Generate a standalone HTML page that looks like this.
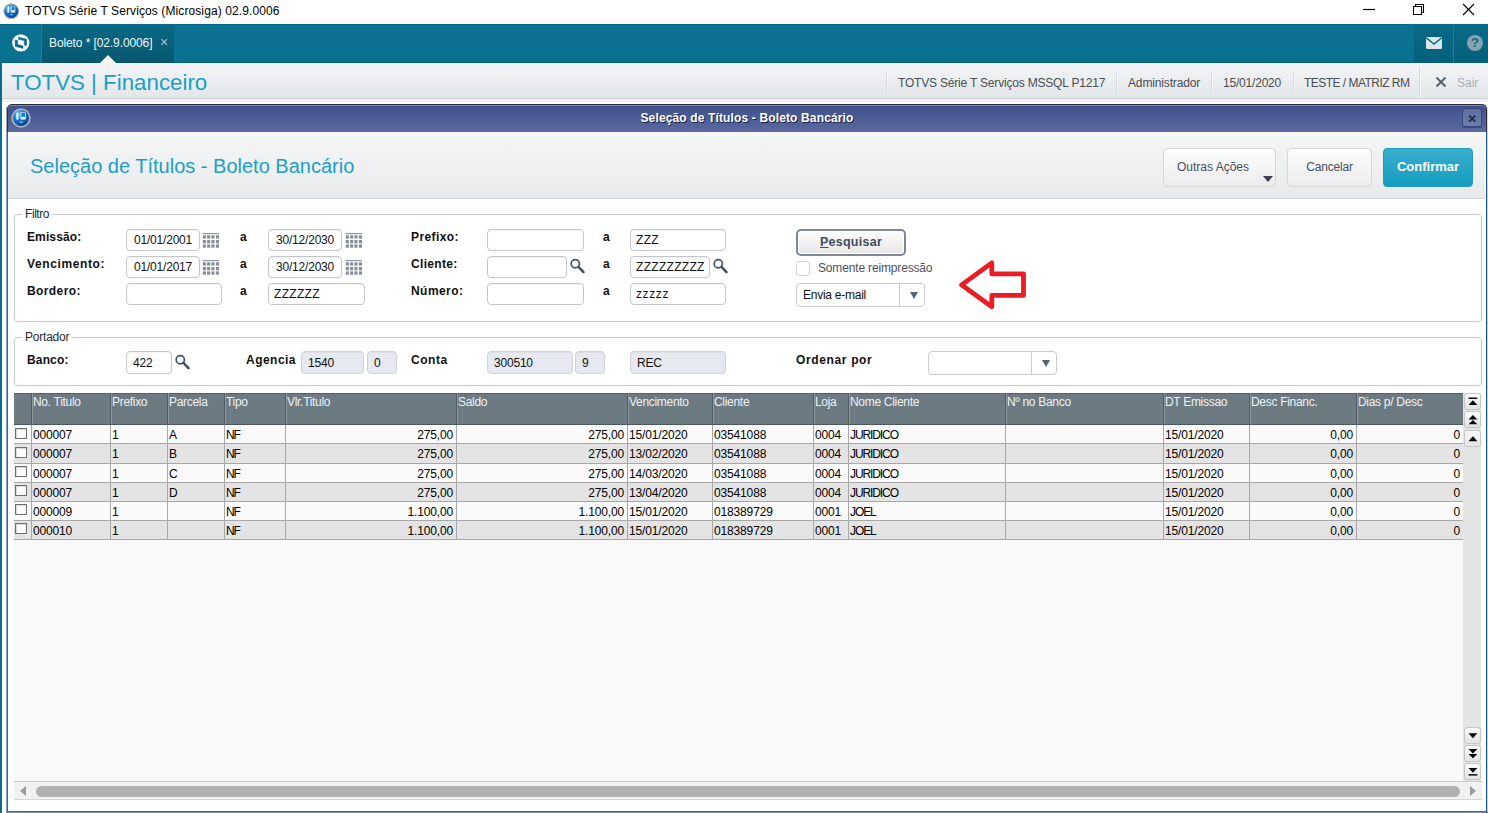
<!DOCTYPE html>
<html>
<head>
<meta charset="utf-8">
<title>TOTVS</title>
<style>
*{box-sizing:border-box;margin:0;padding:0}
html,body{width:1488px;height:813px;overflow:hidden;background:#fff}
body{font-family:"Liberation Sans",sans-serif;font-size:12px;color:#000;position:relative}
.abs{position:absolute}
#wintitle{left:0;top:0;width:1488px;height:24px;background:#fff}
#wintitle .t{left:25px;top:4px;font-size:12px;color:#000;white-space:nowrap;letter-spacing:.1px}
#teal{left:0;top:24px;width:1488px;height:39px;background:#0b7190;border-top:1px solid #056b88;border-bottom:1px solid #03647f}
#leftstrip{left:0;top:63px;width:2px;height:750px;background:#0a6c88}
#tab{left:42px;top:24px;width:132px;height:39px;background:linear-gradient(#0a6a85,#075670)}
#tabsep{left:41px;top:24px;width:1px;height:39px;background:#3a7185}
#tab .t{left:7px;top:12px;color:#eef6f8;font-size:12px;white-space:nowrap;letter-spacing:-.1px}
#tab .x{left:118px;top:10px;color:#a6c6d1;font-size:14px}
#tabarrow{left:100.4px;top:55px;width:0;height:0;border-left:8px solid transparent;border-right:8px solid transparent;border-bottom:8px solid #f4f4f3}
#darkr{left:1414px;top:24px;width:74px;height:39px;background:linear-gradient(#086a86,#05607b)}
#darksep{left:1453px;top:24px;width:1px;height:39px;background:#2a7891}
#hdr{left:2px;top:63px;width:1486px;height:36px;background:linear-gradient(#f4f4f4,#eef0f2 30%,#e4e7ea);border-bottom:1px solid #cfd3d6}
#hdr .brand{left:9px;top:7px;font-size:22.3px;color:#1c9fc6;white-space:nowrap}
.hsep{top:72px;width:1px;height:20px;background:#d9dcdf;box-shadow:1px 0 0 #f4f5f6}
.htxt{top:76px;font-size:12px;color:#4a4d52;white-space:nowrap}
#below{left:2px;top:99px;width:1486px;height:714px;background:linear-gradient(#f0f0f0,#f0f0f0 3px,#fdfdfd 3px)}
#dlg{left:6px;top:112px;width:1482px;height:701px;background:#fff;border:2px solid #3d6594;border-right-color:#1a5283;border-bottom-color:#3b6c98;border-top:none}
#dtitle{left:7px;top:104px;width:1480px;height:28px;background:linear-gradient(#3e4f8a,#5b6a9f);border:1px solid #2b2d3c;border-bottom:none;border-radius:5px 5px 0 0;box-shadow:inset 0 1px 0 #7a89b8}
#dtitle .t{left:0;width:100%;top:6px;text-align:center;color:#fff;font-weight:bold;font-size:12px;letter-spacing:.14px;text-shadow:1px 1px 0 #1d2347}
#dhead{left:8px;top:132px;width:1477px;height:67px;background:linear-gradient(#f5f6f6,#e9eaec);border-bottom:1px solid #d2d4d6}
#dhead .t{left:22px;top:23px;font-size:20px;color:#1c9fc6;white-space:nowrap}

.hico{fill:none}
fieldset{border:none}
.fs{border:1px solid #c6c9cb;border-radius:4px;background:#fff}
.fsl{background:#fff;padding:0 3px;font-size:12px;color:#2a2a2a;white-space:nowrap;line-height:14px}
.lb{font-weight:bold;font-size:12px;color:#111;white-space:nowrap;letter-spacing:.35px;line-height:14px}
.in{letter-spacing:-.2px;height:22px;border:1px solid #c3c7c9;border-radius:4px;background:#fff;font-size:12px;line-height:21px;padding-left:7px;white-space:nowrap;overflow:hidden;color:#111;box-shadow:inset 0 1px 1px rgba(0,0,0,.04)}
.in.dis{background:#e6e9f0;border-color:#cfd2d6}
.zz{letter-spacing:.3px !important;padding-left:5px !important}
.btn{height:39px;border:1px solid #d6d7d9;border-radius:4px;background:linear-gradient(#fdfdfd,#ececec);font-size:12px;color:#4a4f5c;text-align:center;line-height:37px;white-space:nowrap}
#confirm{line-height:36px;background:linear-gradient(#3aadcc,#149ec0);border:1px solid #1b9dbd;color:#fff;font-weight:bold;font-size:13px}
.sel{letter-spacing:-.25px;border:1px solid #c9cccf;border-radius:4px;background:#fff;height:24px;font-size:12px;line-height:22px;padding-left:6px;color:#111}
.sel i{position:absolute;top:0;bottom:0;width:1px;background:#c9cccf}
.sel b{position:absolute;width:0;height:0;border-left:4.5px solid transparent;border-right:4.5px solid transparent;border-top:7px solid #596273}

#grid{left:14px;top:393px;width:1468px;height:389px;background:#f9f9f9}
#ghead{left:14px;top:393px;width:1449px;height:32px;background:#6c7b82;border-bottom:1px solid #4d585d;border-top:1px solid #566166}
.gh{top:393px;height:31px;border-left:1px solid #4f5c62;color:#eef2f3;font-size:12px;padding-left:1px;line-height:14px;padding-top:2px;letter-spacing:-.3px;white-space:nowrap;overflow:hidden;box-shadow:inset 1px 0 0 #8b999f}
.gr{left:14px;width:1449px;height:19px;border-bottom:1px solid #a8a8a8}
.gc{top:0;bottom:0;border-left:1px solid #a8a8a8;font-size:12px;line-height:14px;padding:3px 3px 0 1px;letter-spacing:-.15px;white-space:nowrap;overflow:hidden;color:#000}
.gc.r{text-align:right}
.gc.u{letter-spacing:-1.1px}
.cb{left:1px;top:3px;width:12px;height:11px;border:1px solid #6e6e6e;background:#fcfcfc;box-shadow:inset 1px 1px 0 #d9d9d9}
.vb{left:1464px;width:17px;height:17px;border:1px solid #c6c6c6;border-radius:3px;background:linear-gradient(#fbfbfb,#e3e3e3)}
</style>
</head>
<body>
<div id="wintitle" class="abs"><div class="t abs">TOTVS Série T Serviços (Microsiga) 02.9.0006</div></div>
<div id="teal" class="abs"></div>
<div id="tabsep" class="abs"></div>
<div id="tab" class="abs"><div class="t abs">Boleto * [02.9.0006]</div><div class="x abs">×</div></div>
<div id="darkr" class="abs"></div><div id="darksep" class="abs"></div>
<div id="hdr" class="abs"><div class="brand abs">TOTVS | Financeiro</div></div>
<div id="tabarrow" class="abs"></div>
<div id="leftstrip" class="abs"></div>
<div id="below" class="abs"></div>
<div id="dlg" class="abs"></div>
<div class="abs" style="left:1487px;top:108px;width:1px;height:704px;background:#c9d6e2"></div><div class="abs" style="left:6px;top:812px;width:1480px;height:1px;background:#6d93b6"></div><div class="abs" style="left:6px;top:107px;width:1px;height:25px;background:#a9abb0"></div><div class="abs" style="left:6px;top:132px;width:1px;height:679px;background:#7fa1c2"></div><div id="dtitle" class="abs"><div class="t abs">Seleção de Títulos - Boleto Bancário</div></div>
<div id="dhead" class="abs"><div class="t abs">Seleção de Títulos - Boleto Bancário</div></div>
<div class="btn abs" style="left:1163px;top:148px;width:113px;text-align:left;padding-left:13px">Outras Ações<span class="abs" style="right:2px;top:27px;width:0;height:0;border-left:5.5px solid transparent;border-right:5.5px solid transparent;border-top:6px solid #3d4252"></span></div>
<div class="btn abs" style="left:1287px;top:148px;width:85px;letter-spacing:-.2px">Cancelar</div>
<div class="btn abs" id="confirm" style="left:1383px;top:148px;width:90px">Confirmar</div>
<div class="fs abs" style="left:14px;top:214px;width:1468px;height:108px"></div>
<div class="fsl abs" style="left:22px;top:207px;letter-spacing:-.43px">Filtro</div>
<div class="lb abs" style="left:27px;top:230px;letter-spacing:0.12px">Emissão:</div>
<div class="lb abs" style="left:240px;top:230px">a</div>
<div class="lb abs" style="left:411px;top:230px;letter-spacing:0.4px">Prefixo:</div>
<div class="lb abs" style="left:603px;top:230px">a</div>
<div class="lb abs" style="left:27px;top:257px;letter-spacing:0.62px">Vencimento:</div>
<div class="lb abs" style="left:240px;top:257px">a</div>
<div class="lb abs" style="left:411px;top:257px;letter-spacing:0.33px">Cliente:</div>
<div class="lb abs" style="left:603px;top:257px">a</div>
<div class="lb abs" style="left:27px;top:284px;letter-spacing:0.4px">Bordero:</div>
<div class="lb abs" style="left:240px;top:284px">a</div>
<div class="lb abs" style="left:411px;top:284px;letter-spacing:0.44px">Número:</div>
<div class="lb abs" style="left:603px;top:284px">a</div>
<div class="in abs " style="left:126px;top:229px;width:74px">01/01/2001</div>
<svg class="abs" style="left:202px;top:233px" width="17" height="15" viewBox="0 0 17 15"><rect x="0.5" y="0" width="16.5" height="1.2" fill="#8f95a1"/><rect x="0.8" y="2.3" width="3.1" height="3.3" fill="#868c98"/><rect x="5.1" y="2.3" width="3.1" height="3.3" fill="#868c98"/><rect x="9.4" y="2.3" width="3.1" height="3.3" fill="#868c98"/><rect x="13.9" y="2.3" width="3.1" height="3.3" fill="#868c98"/><rect x="0.8" y="7" width="3.1" height="3.3" fill="#868c98"/><rect x="5.1" y="7" width="3.1" height="3.3" fill="#868c98"/><rect x="9.4" y="7" width="3.1" height="3.3" fill="#868c98"/><rect x="13.9" y="7" width="3.1" height="3.3" fill="#868c98"/><rect x="0.8" y="11.4" width="3.1" height="3.3" fill="#868c98"/><rect x="5.1" y="11.4" width="3.1" height="3.3" fill="#868c98"/><rect x="9.4" y="11.4" width="3.1" height="3.3" fill="#868c98"/><rect x="13.9" y="11.4" width="3.1" height="3.3" fill="#868c98"/></svg>
<div class="in abs " style="left:126px;top:256px;width:74px">01/01/2017</div>
<svg class="abs" style="left:202px;top:260px" width="17" height="15" viewBox="0 0 17 15"><rect x="0.5" y="0" width="16.5" height="1.2" fill="#8f95a1"/><rect x="0.8" y="2.3" width="3.1" height="3.3" fill="#868c98"/><rect x="5.1" y="2.3" width="3.1" height="3.3" fill="#868c98"/><rect x="9.4" y="2.3" width="3.1" height="3.3" fill="#868c98"/><rect x="13.9" y="2.3" width="3.1" height="3.3" fill="#868c98"/><rect x="0.8" y="7" width="3.1" height="3.3" fill="#868c98"/><rect x="5.1" y="7" width="3.1" height="3.3" fill="#868c98"/><rect x="9.4" y="7" width="3.1" height="3.3" fill="#868c98"/><rect x="13.9" y="7" width="3.1" height="3.3" fill="#868c98"/><rect x="0.8" y="11.4" width="3.1" height="3.3" fill="#868c98"/><rect x="5.1" y="11.4" width="3.1" height="3.3" fill="#868c98"/><rect x="9.4" y="11.4" width="3.1" height="3.3" fill="#868c98"/><rect x="13.9" y="11.4" width="3.1" height="3.3" fill="#868c98"/></svg>
<div class="in abs " style="left:126px;top:283px;width:96px"></div>
<div class="in abs " style="left:268px;top:229px;width:74px">30/12/2030</div>
<svg class="abs" style="left:345px;top:233px" width="17" height="15" viewBox="0 0 17 15"><rect x="0.5" y="0" width="16.5" height="1.2" fill="#8f95a1"/><rect x="0.8" y="2.3" width="3.1" height="3.3" fill="#868c98"/><rect x="5.1" y="2.3" width="3.1" height="3.3" fill="#868c98"/><rect x="9.4" y="2.3" width="3.1" height="3.3" fill="#868c98"/><rect x="13.9" y="2.3" width="3.1" height="3.3" fill="#868c98"/><rect x="0.8" y="7" width="3.1" height="3.3" fill="#868c98"/><rect x="5.1" y="7" width="3.1" height="3.3" fill="#868c98"/><rect x="9.4" y="7" width="3.1" height="3.3" fill="#868c98"/><rect x="13.9" y="7" width="3.1" height="3.3" fill="#868c98"/><rect x="0.8" y="11.4" width="3.1" height="3.3" fill="#868c98"/><rect x="5.1" y="11.4" width="3.1" height="3.3" fill="#868c98"/><rect x="9.4" y="11.4" width="3.1" height="3.3" fill="#868c98"/><rect x="13.9" y="11.4" width="3.1" height="3.3" fill="#868c98"/></svg>
<div class="in abs " style="left:268px;top:256px;width:74px">30/12/2030</div>
<svg class="abs" style="left:345px;top:260px" width="17" height="15" viewBox="0 0 17 15"><rect x="0.5" y="0" width="16.5" height="1.2" fill="#8f95a1"/><rect x="0.8" y="2.3" width="3.1" height="3.3" fill="#868c98"/><rect x="5.1" y="2.3" width="3.1" height="3.3" fill="#868c98"/><rect x="9.4" y="2.3" width="3.1" height="3.3" fill="#868c98"/><rect x="13.9" y="2.3" width="3.1" height="3.3" fill="#868c98"/><rect x="0.8" y="7" width="3.1" height="3.3" fill="#868c98"/><rect x="5.1" y="7" width="3.1" height="3.3" fill="#868c98"/><rect x="9.4" y="7" width="3.1" height="3.3" fill="#868c98"/><rect x="13.9" y="7" width="3.1" height="3.3" fill="#868c98"/><rect x="0.8" y="11.4" width="3.1" height="3.3" fill="#868c98"/><rect x="5.1" y="11.4" width="3.1" height="3.3" fill="#868c98"/><rect x="9.4" y="11.4" width="3.1" height="3.3" fill="#868c98"/><rect x="13.9" y="11.4" width="3.1" height="3.3" fill="#868c98"/></svg>
<div class="in abs zz" style="left:268px;top:283px;width:97px">ZZZZZZ</div>
<div class="in abs " style="left:487px;top:229px;width:97px"></div>
<div class="in abs " style="left:487px;top:256px;width:80px"></div>
<svg class="abs" style="left:570px;top:258px" width="16" height="16" viewBox="0 0 16 16"><circle cx="5.3" cy="5.8" r="4.1" fill="#fff" stroke="#46536a" stroke-width="1.7"/><path d="M8.6 9 L13.5 14.1" stroke="#3e4b62" stroke-width="2.5" stroke-linecap="round"/></svg>
<div class="in abs " style="left:487px;top:283px;width:97px"></div>
<div class="in abs zz" style="left:630px;top:229px;width:96px">ZZZ</div>
<div class="in abs zz" style="left:630px;top:256px;width:80px">ZZZZZZZZZ</div>
<svg class="abs" style="left:713px;top:258px" width="16" height="16" viewBox="0 0 16 16"><circle cx="5.3" cy="5.8" r="4.1" fill="#fff" stroke="#46536a" stroke-width="1.7"/><path d="M8.6 9 L13.5 14.1" stroke="#3e4b62" stroke-width="2.5" stroke-linecap="round"/></svg>
<div class="in abs zz" style="left:630px;top:283px;width:96px;letter-spacing:.6px !important">zzzzz</div>
<div class="abs" style="left:796px;top:229px;width:110px;height:27px;border:2px solid #7f8696;border-radius:5px;box-shadow:inset 0 0 0 1px #fff;background:linear-gradient(#fdfdfd,#e7e7e7);text-align:center;font-weight:bold;font-size:12.5px;line-height:23px;color:#444c5d;letter-spacing:.25px"><u>P</u>esquisar</div>
<div class="abs" style="left:796px;top:261px;width:14px;height:15px;border:1px solid #d0d2d4;border-radius:3px;background:#fff"></div>
<div class="abs" style="left:818px;top:261px;font-size:12px;color:#4d5260;white-space:nowrap;letter-spacing:-.16px">Somente reimpressão</div>
<div class="sel abs" style="left:796px;top:283px;width:129px">Envia e-mail<i style="left:102px"></i><b style="left:113px;top:8px"></b></div>
<svg class="abs" style="left:950px;top:250px" width="90" height="70" viewBox="950 250 90 70"><path d="M961.6 284.9 L991.8 262.9 L991.8 273.9 L1023.5 273.9 L1023.5 295.4 L991.8 295.4 L991.8 306.8 Z" fill="none" stroke="#ec1c24" stroke-width="4.8" stroke-linejoin="round"/></svg>
<div class="fs abs" style="left:14px;top:337px;width:1468px;height:49px"></div>
<div class="fsl abs" style="left:22px;top:330px;letter-spacing:-.22px">Portador</div>
<div class="lb abs" style="left:27px;top:353px;letter-spacing:0.15px">Banco:</div>
<div class="in abs " style="left:126px;top:351px;height:23px;line-height:22px;padding-left:6px;width:46px">422</div>
<svg class="abs" style="left:175px;top:354px" width="16" height="16" viewBox="0 0 16 16"><circle cx="5.3" cy="5.8" r="4.1" fill="#fff" stroke="#46536a" stroke-width="1.7"/><path d="M8.6 9 L13.5 14.1" stroke="#3e4b62" stroke-width="2.5" stroke-linecap="round"/></svg>
<div class="lb abs" style="left:246px;top:353px;letter-spacing:0.47px">Agencia</div>
<div class="in abs dis" style="left:301px;top:351px;height:23px;line-height:22px;padding-left:6px;width:63px">1540</div>
<div class="in abs dis" style="left:367px;top:351px;height:23px;line-height:22px;padding-left:6px;width:30px">0</div>
<div class="lb abs" style="left:411px;top:353px;letter-spacing:0.55px">Conta</div>
<div class="in abs dis" style="left:487px;top:351px;height:23px;line-height:22px;padding-left:6px;width:86px">300510</div>
<div class="in abs dis" style="left:575px;top:351px;height:23px;line-height:22px;padding-left:6px;width:30px">9</div>
<div class="in abs dis" style="left:630px;top:351px;height:23px;line-height:22px;padding-left:6px;width:96px">REC</div>
<div class="lb abs" style="left:796px;top:353px;letter-spacing:0.64px">Ordenar por</div>
<div class="sel abs" style="left:928px;top:351px;width:129px"><i style="left:102px"></i><b style="left:113px;top:8px"></b></div>
<!--GS--><div id="grid" class="abs"></div>
<div class="abs" style="left:1463px;top:393px;width:18px;height:389px;background:#e4e4e4"></div>
<div id="ghead" class="abs"></div>
<div class="gh abs" style="left:31px;width:79px">No. Titulo</div>
<div class="gh abs" style="left:110px;width:57px">Prefixo</div>
<div class="gh abs" style="left:167px;width:57px">Parcela</div>
<div class="gh abs" style="left:224px;width:61px">Tipo</div>
<div class="gh abs" style="left:285px;width:171px">Vlr.Titulo</div>
<div class="gh abs" style="left:456px;width:171px">Saldo</div>
<div class="gh abs" style="left:627px;width:85px">Vencimento</div>
<div class="gh abs" style="left:712px;width:101px">Cliente</div>
<div class="gh abs" style="left:813px;width:35px">Loja</div>
<div class="gh abs" style="left:848px;width:157px">Nome Cliente</div>
<div class="gh abs" style="left:1005px;width:158px">Nº no Banco</div>
<div class="gh abs" style="left:1163px;width:86px">DT Emissao</div>
<div class="gh abs" style="left:1249px;width:107px">Desc Financ.</div>
<div class="gh abs" style="left:1356px;width:107px">Dias p/ Desc</div>
<div class="gr abs" style="top:425px;height:19px;background:#fafafa"><div class="cb abs" style="top:3px"></div><div class="gc abs" style="left:17px;width:79px">000007</div><div class="gc abs" style="left:96px;width:57px">1</div><div class="gc abs u" style="left:153px;width:57px">A</div><div class="gc abs u" style="left:210px;width:61px">NF</div><div class="gc abs r" style="left:271px;width:171px">275,00</div><div class="gc abs r" style="left:442px;width:171px">275,00</div><div class="gc abs" style="left:613px;width:85px">15/01/2020</div><div class="gc abs" style="left:698px;width:101px">03541088</div><div class="gc abs" style="left:799px;width:35px">0004</div><div class="gc abs u" style="left:834px;width:157px">JURIDICO</div><div class="gc abs" style="left:991px;width:158px"></div><div class="gc abs" style="left:1149px;width:86px">15/01/2020</div><div class="gc abs r" style="left:1235px;width:107px">0,00</div><div class="gc abs r" style="left:1342px;width:107px">0</div></div>
<div class="gr abs" style="top:444px;height:20px;background:#e4e4e4"><div class="cb abs" style="top:3px"></div><div class="gc abs" style="left:17px;width:79px">000007</div><div class="gc abs" style="left:96px;width:57px">1</div><div class="gc abs u" style="left:153px;width:57px">B</div><div class="gc abs u" style="left:210px;width:61px">NF</div><div class="gc abs r" style="left:271px;width:171px">275,00</div><div class="gc abs r" style="left:442px;width:171px">275,00</div><div class="gc abs" style="left:613px;width:85px">13/02/2020</div><div class="gc abs" style="left:698px;width:101px">03541088</div><div class="gc abs" style="left:799px;width:35px">0004</div><div class="gc abs u" style="left:834px;width:157px">JURIDICO</div><div class="gc abs" style="left:991px;width:158px"></div><div class="gc abs" style="left:1149px;width:86px">15/01/2020</div><div class="gc abs r" style="left:1235px;width:107px">0,00</div><div class="gc abs r" style="left:1342px;width:107px">0</div></div>
<div class="gr abs" style="top:464px;height:19px;background:#fafafa"><div class="cb abs" style="top:2px"></div><div class="gc abs" style="left:17px;width:79px">000007</div><div class="gc abs" style="left:96px;width:57px">1</div><div class="gc abs u" style="left:153px;width:57px">C</div><div class="gc abs u" style="left:210px;width:61px">NF</div><div class="gc abs r" style="left:271px;width:171px">275,00</div><div class="gc abs r" style="left:442px;width:171px">275,00</div><div class="gc abs" style="left:613px;width:85px">14/03/2020</div><div class="gc abs" style="left:698px;width:101px">03541088</div><div class="gc abs" style="left:799px;width:35px">0004</div><div class="gc abs u" style="left:834px;width:157px">JURIDICO</div><div class="gc abs" style="left:991px;width:158px"></div><div class="gc abs" style="left:1149px;width:86px">15/01/2020</div><div class="gc abs r" style="left:1235px;width:107px">0,00</div><div class="gc abs r" style="left:1342px;width:107px">0</div></div>
<div class="gr abs" style="top:483px;height:19px;background:#e4e4e4"><div class="cb abs" style="top:2px"></div><div class="gc abs" style="left:17px;width:79px">000007</div><div class="gc abs" style="left:96px;width:57px">1</div><div class="gc abs u" style="left:153px;width:57px">D</div><div class="gc abs u" style="left:210px;width:61px">NF</div><div class="gc abs r" style="left:271px;width:171px">275,00</div><div class="gc abs r" style="left:442px;width:171px">275,00</div><div class="gc abs" style="left:613px;width:85px">13/04/2020</div><div class="gc abs" style="left:698px;width:101px">03541088</div><div class="gc abs" style="left:799px;width:35px">0004</div><div class="gc abs u" style="left:834px;width:157px">JURIDICO</div><div class="gc abs" style="left:991px;width:158px"></div><div class="gc abs" style="left:1149px;width:86px">15/01/2020</div><div class="gc abs r" style="left:1235px;width:107px">0,00</div><div class="gc abs r" style="left:1342px;width:107px">0</div></div>
<div class="gr abs" style="top:502px;height:19px;background:#fafafa"><div class="cb abs" style="top:2px"></div><div class="gc abs" style="left:17px;width:79px">000009</div><div class="gc abs" style="left:96px;width:57px">1</div><div class="gc abs" style="left:153px;width:57px"></div><div class="gc abs u" style="left:210px;width:61px">NF</div><div class="gc abs r" style="left:271px;width:171px">1.100,00</div><div class="gc abs r" style="left:442px;width:171px">1.100,00</div><div class="gc abs" style="left:613px;width:85px">15/01/2020</div><div class="gc abs" style="left:698px;width:101px">018389729</div><div class="gc abs" style="left:799px;width:35px">0001</div><div class="gc abs u" style="left:834px;width:157px">JOEL</div><div class="gc abs" style="left:991px;width:158px"></div><div class="gc abs" style="left:1149px;width:86px">15/01/2020</div><div class="gc abs r" style="left:1235px;width:107px">0,00</div><div class="gc abs r" style="left:1342px;width:107px">0</div></div>
<div class="gr abs" style="top:521px;height:19px;background:#e4e4e4"><div class="cb abs" style="top:2px"></div><div class="gc abs" style="left:17px;width:79px">000010</div><div class="gc abs" style="left:96px;width:57px">1</div><div class="gc abs" style="left:153px;width:57px"></div><div class="gc abs u" style="left:210px;width:61px">NF</div><div class="gc abs r" style="left:271px;width:171px">1.100,00</div><div class="gc abs r" style="left:442px;width:171px">1.100,00</div><div class="gc abs" style="left:613px;width:85px">15/01/2020</div><div class="gc abs" style="left:698px;width:101px">018389729</div><div class="gc abs" style="left:799px;width:35px">0001</div><div class="gc abs u" style="left:834px;width:157px">JOEL</div><div class="gc abs" style="left:991px;width:158px"></div><div class="gc abs" style="left:1149px;width:86px">15/01/2020</div><div class="gc abs r" style="left:1235px;width:107px">0,00</div><div class="gc abs r" style="left:1342px;width:107px">0</div></div>
<div class="vb abs" style="top:393px"><svg width="15" height="15" viewBox="0 0 17 17" style="display:block"><rect x="4" y="4" width="10" height="1.6" fill="#000"/><path d="M4 12.5 L9 7 L14 12.5 Z" fill="#000"/></svg></div>
<div class="vb abs" style="top:411px"><svg width="15" height="15" viewBox="0 0 17 17" style="display:block"><path d="M4 8.5 L9 3.5 L14 8.5 Z" fill="#000"/><path d="M4 14 L9 9 L14 14 Z" fill="#000"/></svg></div>
<div class="vb abs" style="top:430px"><svg width="15" height="15" viewBox="0 0 17 17" style="display:block"><path d="M4 11.5 L9 6 L14 11.5 Z" fill="#000"/></svg></div>
<div class="vb abs" style="top:727px"><svg width="15" height="15" viewBox="0 0 17 17" style="display:block"><path d="M4 6 L9 11.5 L14 6 Z" fill="#000"/></svg></div>
<div class="vb abs" style="top:745px"><svg width="15" height="15" viewBox="0 0 17 17" style="display:block"><path d="M4 3.5 L9 8.5 L14 3.5 Z" fill="#000"/><path d="M4 9 L9 14 L14 9 Z" fill="#000"/></svg></div>
<div class="vb abs" style="top:763px"><svg width="15" height="15" viewBox="0 0 17 17" style="display:block"><path d="M4 4.5 L9 10 L14 4.5 Z" fill="#000"/><rect x="4" y="11.5" width="10" height="1.6" fill="#000"/></svg></div>
<div class="abs" style="left:14px;top:781px;width:1468px;height:19px;background:#f1f1f1;border-top:1px solid #c9cbcb;border-bottom:1px solid #d4d4d4"></div>
<div class="abs" style="left:36px;top:786px;width:1424px;height:11px;background:#b1b1b1;border-radius:6px"></div>
<div class="abs" style="left:20px;top:786px;width:0;height:0;border-top:5px solid transparent;border-bottom:5px solid transparent;border-right:6px solid #9c9c9c"></div>
<div class="abs" style="left:1470px;top:786px;width:0;height:0;border-top:5px solid transparent;border-bottom:5px solid transparent;border-left:6px solid #9c9c9c"></div><!--GE-->
<div class="hsep abs" style="left:886px"></div>
<div class="hsep abs" style="left:1116px"></div>
<div class="hsep abs" style="left:1211px"></div>
<div class="hsep abs" style="left:1293px"></div>
<div class="hsep abs" style="left:1419px;top:66px;height:32px"></div>
<div class="htxt abs" style="left:898px;letter-spacing:-.19px">TOTVS Série T Serviços MSSQL P1217</div>
<div class="htxt abs" style="left:1128px;letter-spacing:-.15px">Administrador</div>
<div class="htxt abs" style="left:1223px;letter-spacing:-.2px">15/01/2020</div>
<div class="htxt abs" style="left:1304px;letter-spacing:-.53px">TESTE / MATRIZ RM</div>
<svg class="abs" style="left:1435px;top:76px" width="12" height="12" viewBox="0 0 12 12"><path d="M1.5 1.5 L10.5 10.5 M10.5 1.5 L1.5 10.5" stroke="#5a6275" stroke-width="2"/></svg>
<div class="htxt abs" style="left:1457px;color:#a9aebb">Sair</div>
<svg class="abs" style="left:1355px;top:0" width="133" height="24" viewBox="0 0 133 24"><path d="M8 9.5 H20" stroke="#000" stroke-width="1.2"/><path d="M58.5 6.5 H66.5 V14.5 H58.5 Z M60.5 6.5 V4.5 H68.5 V12.5 H66.5" fill="none" stroke="#000" stroke-width="1.1"/><path d="M108 4 L119 15 M119 4 L108 15" stroke="#000" stroke-width="1.1"/></svg>
<svg class="abs" style="left:3px;top:2.5px" width="16.5" height="16.5" viewBox="0 0 20 20"><defs><radialGradient id="g1" cx="35%" cy="25%" r="80%"><stop offset="0" stop-color="#6cc3f5"/><stop offset=".45" stop-color="#0f7fd6"/><stop offset="1" stop-color="#073c8c"/></radialGradient></defs><circle cx="10" cy="10" r="9.7" fill="#b2b4b8"/><circle cx="10" cy="10" r="8.3" fill="url(#g1)"/><rect x="5.4" y="4.6" width="2" height="7" fill="#fff"/><rect x="9.6" y="4.4" width="5.2" height="7" fill="#dcecfa"/><rect x="10.4" y="5" width="3.6" height="3.8" fill="#1a7bd2"/><path d="M10 11.2 L12.2 8.8 L14.4 11.2 Z" fill="#fff"/><rect x="9" y="13.6" width="2.6" height="1.2" fill="#a6d0f2"/></svg>
<svg class="abs" style="left:10.8px;top:108.3px" width="20" height="20" viewBox="0 0 20 20"><defs><radialGradient id="g2" cx="35%" cy="25%" r="80%"><stop offset="0" stop-color="#6cc3f5"/><stop offset=".45" stop-color="#0f7fd6"/><stop offset="1" stop-color="#073c8c"/></radialGradient></defs><circle cx="10" cy="10" r="9.7" fill="#b2b4b8"/><circle cx="10" cy="10" r="8" fill="url(#g2)"/><rect x="5.4" y="4.6" width="2" height="7" fill="#fff"/><rect x="9.6" y="4.4" width="5.2" height="7" fill="#dcecfa"/><rect x="10.4" y="5" width="3.6" height="3.8" fill="#1a7bd2"/><path d="M10 11.2 L12.2 8.8 L14.4 11.2 Z" fill="#fff"/><rect x="9" y="13.6" width="2.6" height="1.2" fill="#a6d0f2"/></svg>
<svg class="abs" style="left:8px;top:30px" width="26" height="26" viewBox="0 0 26 26"><circle cx="12.8" cy="12.8" r="8.6" fill="#fff"/><path d="M10.5 7.3 L18.6 9.2 L18.6 15.7 L16.3 15 L16.3 10.6 L10.5 9.3 Z" fill="#0a6a86" stroke="#0a6a86" stroke-width=".6" stroke-linejoin="round"/><path d="M7.2 9.9 L9.6 10.55 L9.6 14.4 L15 16 L15 18.4 L7.2 16.3 Z" fill="#0a6a86" stroke="#0a6a86" stroke-width=".6" stroke-linejoin="round"/></svg>
<svg class="abs" style="left:1426px;top:37px" width="16" height="12" viewBox="0 0 16 12"><rect x="0" y="0" width="16" height="12" rx="1.5" fill="#dbe6ec"/><path d="M0.5 1 L8 7 L15.5 1" fill="none" stroke="#0a6a86" stroke-width="1.6"/></svg>
<div class="abs" style="left:1467px;top:35px;width:16px;height:16px;border-radius:8px;background:#86a3b3;color:#0a6a86;font-weight:bold;font-size:13px;text-align:center;line-height:16px">?</div>
<div class="abs" style="left:1462px;top:108px;width:20px;height:20px;border:1px solid #3a467a;border-bottom:2px solid #3b4880;border-radius:3px;background:linear-gradient(#5f6c9f,#6f7dad)"><svg width="18" height="17" viewBox="0 0 18 17" style="display:block"><path d="M6.2 6.6 L12.2 12.6 M12.2 6.6 L6.2 12.6" stroke="#262b47" stroke-width="1.9"/></svg></div>
</body>
</html>
